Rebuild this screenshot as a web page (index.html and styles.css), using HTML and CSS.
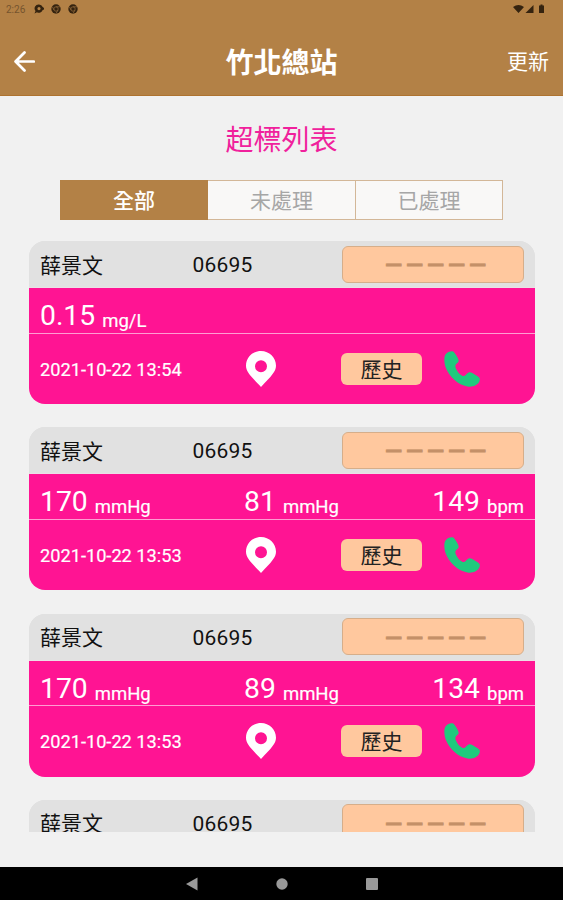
FILE: index.html
```html
<!DOCTYPE html>
<html lang="zh-Hant">
<head>
<meta charset="utf-8">
<title>超標列表</title>
<link rel="stylesheet" href="styles.css">
</head>
<body>
<svg width="0" height="0" class="defs">
  <symbol id="pin" viewBox="0 0 30 36"><path fill-rule="evenodd" d="M15 0C6.700 0 0 6.500 0 14.800C0 20.500 4.500 25 15 36C25.500 25 30 20.500 30 14.800C30 6.500 23.300 0 15 0ZM15 9.300a6 6 0 1 1 0 12a6 6 0 1 1 0-12Z"/></symbol>
  <symbol id="phone" viewBox="0 0 36 36"><path d="M1.500 3.500C3.500 1 6 0 8.500 .3C10 .6 11.500 3 13.500 6.500C15.200 9.800 15 10.500 13 12.300C11.200 14 10.900 15 11.900 17.500C13.500 21 16 23.900 18.600 24.900C20.200 25.400 21 24.700 22.600 23C24.600 21.100 26 20.900 28.300 22.100L34 25.600C36 27 36.300 28.300 35.300 30.500C33.600 34.300 28.500 36.300 23.500 35.500C14 34 5 25.500 1.700 16.500C0 11.500-.2 6 1.500 3.500Z"/></symbol>
</svg>
<header class="appbar">
  <div class="status">
    <div class="status-left">
      <span class="clock">2:26</span>
      <svg class="dot" viewBox="0 0 10 10"><path fill-rule="evenodd" d="M5 .5a4 4 0 0 1 3.700 2.500L10 4v1.500L8.700 6A4 4 0 0 1 3 8.200L.5 9.500L1.500 7A4 4 0 0 1 5 .5ZM5 3a1.600 1.600 0 1 0 0 3.200A1.600 1.600 0 0 0 5 3Z"/></svg>
      <svg class="dot" viewBox="0 0 10 10"><circle cx="5" cy="5" r="4.700"/><circle class="ring" cx="5" cy="5" r="2.200"/><path class="ring" d="M5 2.800h4M3 6L1.500 3M7 6L5 9.500"/></svg>
      <svg class="dot" viewBox="0 0 10 10"><circle cx="5" cy="5" r="4.700"/><circle class="ring" cx="5" cy="5" r="2.200"/><path class="ring" d="M5 2.800h4M3 6L1.500 3M7 6L5 9.500"/></svg>
    </div>
    <svg class="signals" viewBox="0 0 34 10"><path d="M0 3Q5.500-1 11 3L5.500 9ZM12.500 9L20.500 1V9ZM26 1.500h1.500V.5h2v1H31V9h-5Z"/></svg>
  </div>
  <div class="bar">
    <svg class="back" viewBox="0 0 20 20"><path d="M18.800 10H1.800M10 1.400L1.500 10L10 18.600"/></svg>
    <h1>竹北總站</h1>
    <span class="refresh">更新</span>
  </div>
</header>
<main>
  <h2>超標列表</h2>
  <nav class="tabs"><span class="tab active">全部</span><span class="tab">未處理</span><span class="tab">已處理</span></nav>
  <section class="list">
    <article class="card">
      <div class="head"><span class="name">薛景文</span><span class="code">06695</span><span class="state">－－－－－</span></div>
      <div class="values"><span><b>0.15</b><small>mg/L</small></span></div>
      <div class="foot"><time>2021-10-22 13:54</time><svg class="pin"><use href="#pin"/></svg><span class="history">歷史</span><svg class="phone"><use href="#phone"/></svg></div>
    </article>
    <article class="card">
      <div class="head"><span class="name">薛景文</span><span class="code">06695</span><span class="state">－－－－－</span></div>
      <div class="values"><span><b>170</b><small>mmHg</small></span><span><b>81</b><small>mmHg</small></span><span><b>149</b><small>bpm</small></span></div>
      <div class="foot"><time>2021-10-22 13:53</time><svg class="pin"><use href="#pin"/></svg><span class="history">歷史</span><svg class="phone"><use href="#phone"/></svg></div>
    </article>
    <article class="card">
      <div class="head"><span class="name">薛景文</span><span class="code">06695</span><span class="state">－－－－－</span></div>
      <div class="values"><span><b>170</b><small>mmHg</small></span><span><b>89</b><small>mmHg</small></span><span><b>134</b><small>bpm</small></span></div>
      <div class="foot"><time>2021-10-22 13:53</time><svg class="pin"><use href="#pin"/></svg><span class="history">歷史</span><svg class="phone"><use href="#phone"/></svg></div>
    </article>
    <article class="card">
      <div class="head"><span class="name">薛景文</span><span class="code">06695</span><span class="state">－－－－－</span></div>
    </article>
  </section>
</main>
<footer class="navbar">
  <svg viewBox="0 0 12 14"><path d="M11.500 .5V13.500L0 7Z"/></svg>
  <svg viewBox="0 0 12 14"><circle cx="6" cy="7" r="5.700"/></svg>
  <svg viewBox="0 0 12 14"><rect y="1" width="12" height="12" rx="1"/></svg>
</footer>
</body>
</html>
```
FILE: styles.css
```css
* { box-sizing: border-box; }
body {
  margin: 0;
  width: 563px;
  height: 900px;
  overflow: hidden;
  display: flex;
  flex-direction: column;
  background: #f1f1f1;
  font-family: Roboto, "Noto Sans CJK TC", sans-serif;
  color: #111;
}
.defs { position: absolute; }
h1, h2 { margin: 0; }
.appbar {
  height: 96px;
  flex: none;
  background: #b38146;
  border-bottom: 1px solid #ae7330;
  color: #fff;
}
.status {
  height: 18px;
  padding: 0 19px 0 6px;
  display: flex;
  justify-content: space-between;
  align-items: center;
}
.status-left { display: flex; align-items: center; }
.clock { width: 28px; font-size: 10px; color: #75542e; }
.dot { width: 10px; height: 10px; margin-right: 7px; fill: #35230f; }
.ring { fill: none; stroke: #8d6638; stroke-width: .8; }
.signals { width: 34px; height: 10px; margin-right: -3px; fill: #35230f; }
.bar {
  height: 86px;
  padding: 0 14px;
  display: grid;
  grid-template-columns: 1fr auto 1fr;
  align-items: center;
}
.back { width: 21px; height: 21px; fill: none; stroke: #fff; stroke-width: 2.6; stroke-linecap: round; stroke-linejoin: round; }
h1 { padding-top: 5px; font-size: 28px; line-height: 40px; font-weight: 700; }
.refresh { padding-top: 2px; justify-self: end; font-size: 21px; line-height: 30px; }
main { height: 771px; flex: none; }
h2 {
  padding-top: 25px;
  text-align: center;
  font-size: 28px;
  line-height: 40px;
  font-weight: 400;
  color: #f0219c;
}
.tabs {
  width: 443px;
  height: 40px;
  margin: 19px 0 0 60px;
  display: grid;
  grid-template-columns: 147px 147px 1fr;
  border: 1px solid #d3b798;
  background: #f9f8f7;
}
.tab {
  display: flex;
  align-items: center;
  justify-content: center;
  padding-bottom: 2px;
  font-size: 21px;
  color: #a6a6a6;
}
.tab + .tab + .tab { border-left: 1px solid #d3b798; }
.tab.active { margin: -1px 0 -1px -1px; background: #b38146; color: #fff; font-weight: 500; }
.list {
  height: 591px;
  margin: 21px 28px 0 28.500px;
  overflow: hidden;
  display: flex;
  flex-direction: column;
  gap: 23.300px;
}
.card {
  height: 163px;
  flex: none;
  border-radius: 16px;
  overflow: hidden;
  background: linear-gradient(#e1e1e1 46px, #ff1493 46px);
}
.head {
  height: 47px;
  padding: 0 11px 0 11.500px;
  display: grid;
  grid-template-columns: 152.500px 149px 1fr;
  align-items: center;
  background: #e1e1e1;
  border-bottom: 1px solid #ecdfe6;
  font-size: 21px;
}
.name { padding-bottom: 1px; }
.code { padding-top: 2px; letter-spacing: .2px; }
.state {
  height: 37px;
  padding: 0 0 2px 6px;
  display: flex;
  align-items: center;
  justify-content: center;
  border: 1px solid #d6ae8a;
  border-radius: 6px;
  background: #ffc89e;
  color: #c49068;
  font-weight: 700;
  -webkit-text-stroke: .8px #c49068;
}
.values {
  height: 45.500px;
  padding: 9px 11px 0 11.500px;
  display: flex;
  justify-content: space-between;
  border-bottom: 1px solid #ff9dd2;
  color: #fff;
  line-height: 38px;
}
.values b { font-size: 28.300px; font-weight: 400; }
.values small { position: relative; top: 2px; margin-left: 7px; font-size: 18.500px; -webkit-text-stroke: .2px #fff; }
.foot {
  height: 70px;
  padding-left: 11.500px;
  display: grid;
  grid-template-columns: 206px 95px 103px 1fr;
  align-items: center;
  color: #fff;
}
time { padding-top: 1px; font-size: 18.200px; -webkit-text-stroke: .2px #fff; }
.pin { width: 30px; height: 36px; fill: #fff; }
.history {
  width: 81px;
  height: 32px;
  padding-bottom: 2px;
  display: flex;
  align-items: center;
  justify-content: center;
  border-radius: 6px;
  background: #ffc89e;
  color: #222;
  font-size: 21px;
}
.phone { width: 36px; height: 36px; fill: #20ca7d; }
.navbar {
  height: 33px;
  flex: none;
  display: flex;
  justify-content: center;
  align-items: center;
  gap: 78px;
  background: #000;
}
.navbar svg { width: 12px; height: 14px; fill: #999; }
```
